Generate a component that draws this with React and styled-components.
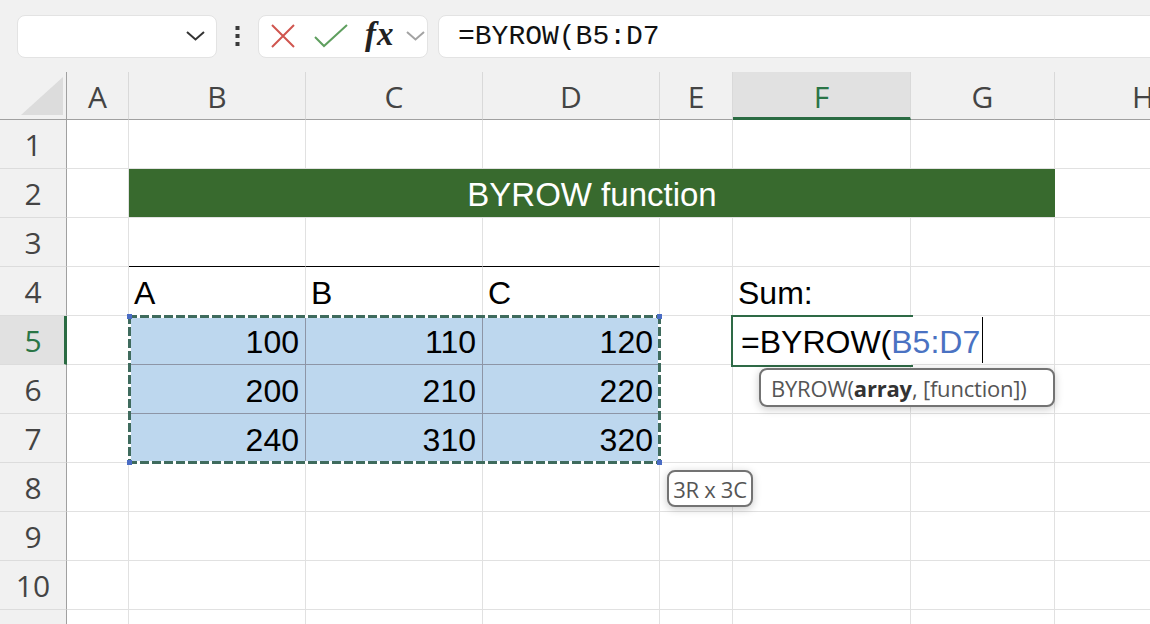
import React from 'react';
import styled, { createGlobalStyle } from 'styled-components';

const GlobalStyle = createGlobalStyle`
  html, body {
    margin: 0;
    padding: 0;
    background: #fff;
  }
  body {
    font-family: "Liberation Sans", Arial, sans-serif;
  }
`;

const Window = styled.div`
  width: 1150px;
  height: 624px;
  overflow: hidden;
  background: #fff;
`;

const Toolbar = styled.div`
  height: 72px;
  background: #f1f1f1;
  display: flex;
  align-items: center;
  padding-left: 17px;
  box-sizing: border-box;
`;

const Box = styled.div`
  height: 43px;
  background: #fff;
  border: 1px solid #e3e3e3;
  border-radius: 8px;
  box-sizing: border-box;
  display: flex;
  align-items: center;
  flex-shrink: 0;
`;

const NameBox = styled(Box)`
  width: 200px;
  justify-content: flex-end;
  padding-right: 11px;
`;

const Dots = styled.div`
  width: 41px;
  display: flex;
  justify-content: center;
`;

const FxBox = styled(Box)`
  width: 170px;
  padding-left: 12px;
`;

const FxGlyph = styled.span`
  font-family: "Liberation Serif", "Times New Roman", serif;
  font-style: italic;
  font-weight: 700;
  font-size: 33px;
  line-height: 1;
  color: #222;
  margin: -4px 11px 0 17px;
  letter-spacing: 1px;
`;

const FormulaBox = styled(Box)`
  flex: 1;
  margin-left: 10px;
  margin-right: -20px;
  padding-left: 19px;
  font-family: "Liberation Mono", "DejaVu Sans Mono", monospace;
  font-size: 28px;
  color: #111;
`;

const Sheet = styled.div`
  display: grid;
  grid-template-columns: 67px 62px 177px 177px 177px 73px 178px 144px 177px;
  grid-template-rows: 48px repeat(11, 49px);
  background: #fff;
`;

const Corner = styled.div`
  position: relative;
  background: #f1f1f1;
  border-right: 1px solid #a0a0a0;
  border-bottom: 1px solid #a0a0a0;
  box-sizing: border-box;

  &::after {
    content: '';
    position: absolute;
    right: 3px;
    bottom: 4px;
    width: 0;
    height: 0;
    border-left: 42px solid transparent;
    border-bottom: 38px solid #dcdcdc;
  }
`;

const ColHeader = styled.div`
  background: ${p => (p.$active ? '#e1e1e1' : '#f1f1f1')};
  color: ${p => (p.$active ? '#2a7546' : '#444')};
  border-right: 1px solid #d9d9d9;
  border-bottom: ${p => (p.$active ? '3px solid #2a6b42' : '1px solid #a0a0a0')};
  box-sizing: border-box;
  display: flex;
  align-items: center;
  justify-content: center;
  padding-top: ${p => (p.$active ? '4px' : '2px')};
  font-family: "Open Sans", "Noto Sans", sans-serif;
  font-size: 30px;
`;

const RowHeader = styled.div`
  background: ${p => (p.$active ? '#e1e1e1' : '#f1f1f1')};
  color: ${p => (p.$active ? '#2a7546' : '#444')};
  border-right: ${p => (p.$active ? '3px solid #2a6b42' : '1px solid #a0a0a0')};
  border-bottom: 1px solid #dcdcdc;
  box-sizing: border-box;
  display: flex;
  align-items: center;
  justify-content: center;
  padding-left: ${p => (p.$active ? '2px' : '0')};
  font-family: "Open Sans", "Noto Sans", sans-serif;
  font-size: 30px;
`;

const Cell = styled.div`
  grid-column: ${p => p.$col} / span ${p => p.$span || 1};
  grid-row: ${p => p.$row};
  background: ${p => (p.$fill ? '#bdd7ee' : '#fff')};
  border-right: 1px solid ${p => (p.$fill ? '#8d95a6' : '#e1e1e1')};
  border-bottom: 1px solid ${p => (p.$rule ? '#000' : p.$fill ? '#8d95a6' : '#e1e1e1')};
  box-sizing: border-box;
  display: flex;
  align-items: flex-end;
  justify-content: ${p => (p.$right ? 'flex-end' : 'flex-start')};
  padding: 0 6px 6px 5px;
  font-size: 32px;
  line-height: 1;
  color: #000;
  white-space: nowrap;
`;

const Band = styled.div`
  grid-column: 3 / span 6;
  grid-row: 3;
  background: #386a2e;
  color: #fff;
  display: flex;
  align-items: center;
  justify-content: center;
  padding-top: 3px;
  font-size: 33px;
  border-bottom: 1px solid #e1e1e1;
  box-sizing: border-box;
`;

const RangeBorder = styled.div`
  grid-column: 3 / span 3;
  grid-row: 6 / span 3;
  margin: -1px;
  position: relative;
  z-index: 2;
  pointer-events: none;
  background:
    repeating-linear-gradient(90deg, #3f6b5d 0 9px, #fff 9px 12px) left top / 100% 3px no-repeat,
    repeating-linear-gradient(90deg, #3f6b5d 0 9px, #fff 9px 12px) left bottom / 100% 3px no-repeat,
    repeating-linear-gradient(180deg, #3f6b5d 0 9px, #fff 9px 12px) left top / 3px 100% no-repeat,
    repeating-linear-gradient(180deg, #3f6b5d 0 9px, #fff 9px 12px) right top / 3px 100% no-repeat;
`;

const Handle = styled.span`
  position: absolute;
  width: 5px;
  height: 5px;
  background: #4a6cc4;
  left: ${p => (p.$right ? 'auto' : '-1px')};
  right: ${p => (p.$right ? '-1px' : 'auto')};
  top: ${p => (p.$bottom ? 'auto' : '-1px')};
  bottom: ${p => (p.$bottom ? '-1px' : 'auto')};
`;

const Badge = styled.div`
  position: absolute;
  background: #fff;
  border: 2px solid #737373;
  border-radius: 8px;
  box-shadow: 0 2px 8px rgba(0, 0, 0, 0.22);
  box-sizing: border-box;
  display: flex;
  align-items: center;
  font-family: "Open Sans", "Noto Sans", sans-serif;
  font-size: 22px;
  color: #555;
  white-space: nowrap;
`;

const SizeBadge = styled(Badge)`
  left: 539px;
  top: 155px;
  width: 86px;
  height: 37px;
  justify-content: center;
  letter-spacing: -0.3px;
`;

const ActiveCell = styled.div`
  grid-column: 7;
  grid-row: 6;
  margin: -1px -2px -2px -2px;
  border: 2px solid #2e6a46;
  border-right: none;
  position: relative;
  z-index: 3;
  display: flex;
  font-size: 32px;
  line-height: 1;
  white-space: nowrap;
`;

const Editor = styled.div`
  flex-shrink: 0;
  display: flex;
  align-items: flex-end;
  background: #fff;
  padding: 0 2px 5px 8px;
  border-right: 1px solid #000;
  margin-bottom: 2px;
`;

const Ref = styled.span`
  color: #4a72c2;
`;

const HintBadge = styled(Badge)`
  left: 26px;
  top: 51px;
  width: 296px;
  height: 39px;
  padding-left: 10px;
  letter-spacing: -0.2px;

  b {
    color: #333;
    font-weight: 700;
  }
`;

const COLS = ['A', 'B', 'C', 'D', 'E', 'F', 'G', 'H'];

const DATA = {
  B4: 'A', C4: 'B', D4: 'C', F4: 'Sum:',
  B5: 100, C5: 110, D5: 120,
  B6: 200, C6: 210, D6: 220,
  B7: 240, C7: 310, D7: 320,
};

const inRange = (col, row) => 'BCD'.includes(col) && row >= 5 && row <= 7;

const Chevron = ({ color }) => (
  <svg width="19" height="10" viewBox="0 0 19 10">
    <polyline points="1,1 9.5,8.5 18,1" fill="none" stroke={color} strokeWidth="2" />
  </svg>
);

const App = () => {
  const items = [];
  for (let r = 1; r <= 11; r++) {
    items.push(
      <RowHeader key={`h${r}`} $active={r === 5} style={{ gridRow: r + 1, gridColumn: 1 }}>
        {r}
      </RowHeader>
    );
    COLS.forEach((col, i) => {
      const gc = i + 2;
      const id = `${col}${r}`;
      if (r === 2 && 'CDEFG'.includes(col)) return;
      if (r === 2 && col === 'B') {
        items.push(<Band key={id}>BYROW function</Band>);
        return;
      }
      if (r === 5 && col === 'F') {
        items.push(
          <ActiveCell key={id}>
            <Editor>
              =BYROW(<Ref>B5:D7</Ref>
            </Editor>
            <HintBadge>
              BYROW(<b>array</b>, [function])
            </HintBadge>
          </ActiveCell>
        );
        return;
      }
      const value = DATA[id];
      items.push(
        <Cell
          key={id}
          $col={gc}
          $row={r + 1}
          $fill={inRange(col, r)}
          $right={typeof value === 'number'}
          $rule={r === 3 && 'BCD'.includes(col)}
        >
          {value}
        </Cell>
      );
    });
  }

  return (
    <Window>
      <GlobalStyle />
      <Toolbar>
        <NameBox>
          <Chevron color="#333" />
        </NameBox>
        <Dots>
          <svg width="5" height="21" viewBox="0 0 5 21">
            <rect x="0.5" y="0" width="4" height="4" fill="#3a3a3a" />
            <rect x="0.5" y="8" width="4" height="4" fill="#3a3a3a" />
            <rect x="0.5" y="16" width="4" height="4" fill="#3a3a3a" />
          </svg>
        </Dots>
        <FxBox>
          <svg width="24" height="24" viewBox="0 0 24 24">
            <path d="M1 1 L23 23 M23 1 L1 23" stroke="#d0554f" strokeWidth="2" fill="none" />
          </svg>
          <svg width="34" height="24" viewBox="0 0 34 24" style={{ marginLeft: 19 }}>
            <polyline points="1,13 10,22 33,1" fill="none" stroke="#5f9f5f" strokeWidth="2" />
          </svg>
          <FxGlyph>fx</FxGlyph>
          <Chevron color="#a3a3a3" />
        </FxBox>
        <FormulaBox>=BYROW(B5:D7</FormulaBox>
      </Toolbar>
      <Sheet>
        <Corner style={{ gridRow: 1, gridColumn: 1 }} />
        {COLS.map((c, i) => (
          <ColHeader key={c} $active={c === 'F'} style={{ gridRow: 1, gridColumn: i + 2 }}>
            {c}
          </ColHeader>
        ))}
        {items}
        <RangeBorder>
          <Handle />
          <Handle $right />
          <Handle $bottom />
          <Handle $right $bottom />
          <SizeBadge>3R x 3C</SizeBadge>
        </RangeBorder>
      </Sheet>
    </Window>
  );
};

export default App;
